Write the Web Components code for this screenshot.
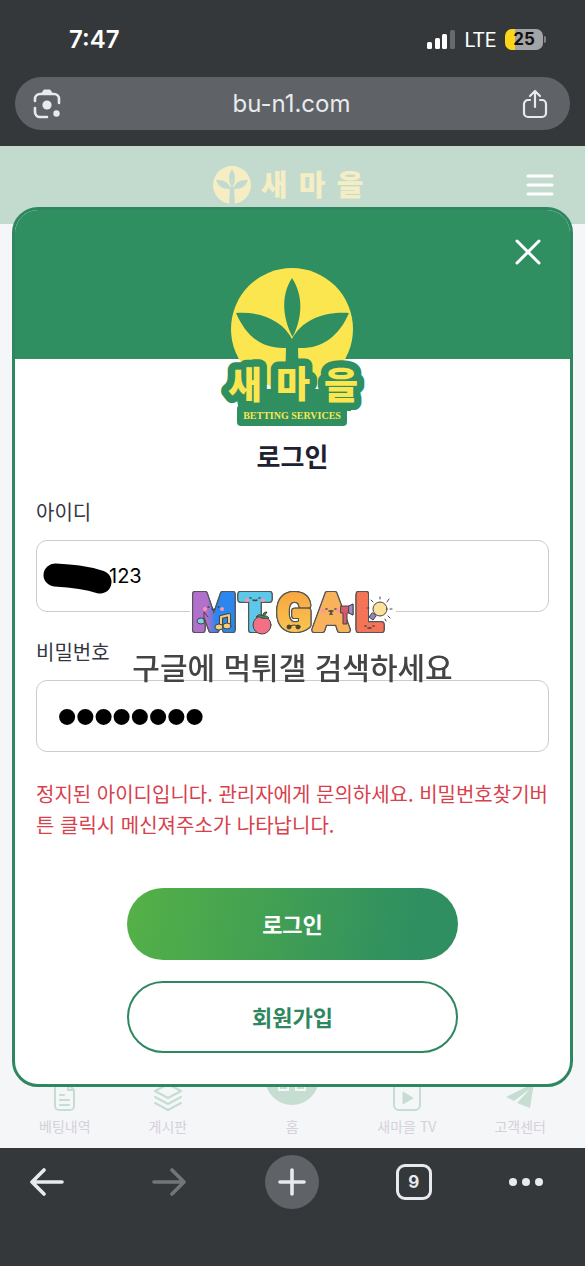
<!DOCTYPE html>
<html lang="ko">
<head>
<meta charset="utf-8">
<meta name="viewport" content="width=device-width, initial-scale=1">
<title>새마을</title>
<style>
    body {
        margin: 0;
        min-height: 100vh;
        display: flex;
        flex-direction: column;
        background-color: #35383b;
        font-family: "Noto Sans CJK KR", sans-serif;
    }
    site-page {
        flex: 1;
    }
</style>
</head>
<body>
<status-bar time="7:47" network="LTE" battery="25"></status-bar>
<address-bar>bu-n1.com</address-bar>
<site-page>
    <site-header slot="header"></site-header>
    <login-modal slot="modal" titulo="로그인">
        <text-field label="아이디" type="text" value="123" masked></text-field>
        <text-field label="비밀번호" type="password" value="abcd1234"></text-field>
        <span slot="error">정지된 아이디입니다. 관리자에게 문의하세요. 비밀번호찾기버튼 클릭시 메신져주소가 나타납니다.</span>
        <pill-button slot="actions" class="filled">로그인</pill-button>
        <pill-button slot="actions">회원가입</pill-button>
    </login-modal>
    <site-tabs slot="tabs"></site-tabs>
</site-page>
<browser-toolbar count="9"></browser-toolbar>
<water-mark>구글에 먹튀갤 검색하세요</water-mark>

<script>
// Common base: every component only gives its template and its styles
class BaseElement extends HTMLElement {
    constructor() {
        super();
        this.attachShadow({ mode: "open" });
    }

    connectedCallback() {
        const template = document.createElement("template");
        template.innerHTML = `${this.getTemplate()}<style>${this.getStyles()}</style>`;
        this.shadowRoot.appendChild(template.content.cloneNode(true));
    }
}

class StatusBar extends BaseElement {
    getTemplate() {
        return `
            <time>${this.getAttribute("time")}</time>
            <div class="right">
                <svg width="29" height="19" viewBox="0 0 29 19">
                    <g fill="#fff">
                        <rect x="0" y="12" width="5" height="7" rx="1.5"/>
                        <rect x="8" y="8" width="5" height="11" rx="1.5"/>
                        <rect x="15" y="4" width="5" height="15" rx="1.5"/>
                    </g>
                    <rect x="23" y="0" width="5" height="19" rx="1.5" fill="#67696c"/>
                </svg>
                <span class="network">${this.getAttribute("network")}</span>
                <span class="battery">${this.getAttribute("battery")}</span>
            </div>
        `;
    }

    getStyles() {
        return `
            :host {
                display: flex;
                justify-content: space-between;
                align-items: center;
                height: 77px;
                box-sizing: border-box;
                padding: 2px 38px 0 69px;
                color: #fff;
                font-family: Inter, sans-serif;
            }
            time {
                font-size: 24px;
                font-weight: 600;
            }
            .right {
                display: flex;
                align-items: center;
                gap: 9px;
            }
            .network {
                font-family: Roboto, sans-serif;
                font-size: 20px;
            }
            .battery {
                position: relative;
                width: 38px;
                margin-right: 4px;
                border-radius: 7px;
                background: linear-gradient(90deg, #fdd61a 10px, #a3a4a6 10px);
                color: #111;
                font-size: 17px;
                font-weight: 700;
                line-height: 21px;
                text-align: center;
            }
            .battery::after {
                content: "";
                position: absolute;
                left: 39px;
                top: 7px;
                width: 2px;
                height: 7px;
                border-radius: 0 2px 2px 0;
                background-color: #808285;
            }
        `;
    }
}

class AddressBar extends BaseElement {
    getTemplate() {
        return `
            <button aria-label="Lens">
                <svg width="28" height="30" viewBox="0 0 28 30" fill="none" stroke="#e8eaed" stroke-width="2.6" stroke-linecap="round">
                    <path d="M2 12V10a5 5 0 0 1 5-5h14a5 5 0 0 1 5 5v4M2 19v4a5 5 0 0 0 5 5h7"/>
                    <path d="M9 4l2-3h6l2 3z" fill="#e8eaed" stroke-width="1"/>
                    <circle cx="14" cy="16" r="4.6" fill="#e8eaed" stroke="none"/>
                    <circle cx="23.5" cy="24.5" r="3.2" fill="#e8eaed" stroke="none"/>
                </svg>
            </button>
            <button class="url"><slot></slot></button>
            <button aria-label="Share">
                <svg width="26" height="30" viewBox="0 0 26 30" fill="none" stroke="#e8eaed" stroke-width="2.2" stroke-linecap="round" stroke-linejoin="round">
                    <path d="M8 11H6a4 4 0 0 0-4 4v9a4 4 0 0 0 4 4h14a4 4 0 0 0 4-4v-9a4 4 0 0 0-4-4h-2M13 18V2M8 7l5-5 5 5"/>
                </svg>
            </button>
        `;
    }

    getStyles() {
        return `
            :host {
                display: flex;
                align-items: center;
                height: 53px;
                margin: 0 15px 16px;
                padding: 0 22px 0 18px;
                border-radius: 27px;
                background-color: #5f6266;
            }
            button {
                display: flex;
                padding: 0;
                border: 0;
                background: none;
                color: #e8eaed;
            }
            .url {
                flex: 1;
                justify-content: center;
                font: 24px Inter, sans-serif;
            }
        `;
    }
}

class SitePage extends BaseElement {
    getTemplate() {
        return `
            <slot name="header"></slot>
            <slot name="tabs"></slot>
            <div class="overlay"><slot name="modal"></slot></div>
        `;
    }

    getStyles() {
        return `
            :host {
                position: relative;
                display: flex;
                flex-direction: column;
                justify-content: space-between;
                background-color: #f5f6f8;
            }
            .overlay {
                position: absolute;
                inset: 0;
                display: flex;
                align-items: center;
                padding: 0 12px;
            }
            ::slotted(login-modal) {
                flex: 1;
            }
        `;
    }
}

class SiteHeader extends BaseElement {
    getTemplate() {
        return `
            <span></span>
            <svg class="logo" width="152" height="40" viewBox="0 0 152 40">
                <circle cx="19" cy="20" r="19" fill="#f5edc4"/>
                <g fill="#c3dace">
                    <path d="M19 4q6 9 0 19q-6-10 0-19zM3 15q12-1 15 9q-12 1-15-9zM35 15q-12-1-15 9q12 1 15-9z"/>
                    <path d="M17 22h4l1 18h-6z"/>
                </g>
                <g fill="#f5edc4" font-family="Noto Sans CJK KR, sans-serif" font-weight="900" font-size="29" text-anchor="middle">
                    <text x="61" y="31">새</text>
                    <text x="99" y="31">마</text>
                    <text x="137" y="31">을</text>
                </g>
            </svg>
            <button aria-label="메뉴">
                <svg width="28" height="24" viewBox="0 0 28 24" stroke="#fff" stroke-width="3" stroke-linecap="round">
                    <path d="M2 3h24M2 12h24M2 21h24"/>
                </svg>
            </button>
        `;
    }

    getStyles() {
        return `
            :host {
                display: grid;
                grid-template-columns: 1fr auto 1fr;
                align-items: center;
                height: 78px;
                padding: 0 31px 0 23px;
                background-color: #c3dace;
            }
            .logo {
                overflow: visible;
            }
            button {
                display: flex;
                justify-self: end;
                padding: 0;
                border: 0;
                background: none;
            }
        `;
    }
}

class BrandLogo extends BaseElement {
    getTemplate() {
        return `
            <svg width="147" height="160" viewBox="0 0 147 160">
                <circle cx="73" cy="62" r="61" fill="#fbe650"/>
                <g fill="#2f8f60">
                    <path d="M73 11C83 26 85 48 73.5 70C62 48 63 26 73 11z"/>
                    <path d="M17 46C42 44 64 54 73 72C82 54 104 44 130 46C119 71 102 82 79 81L80 118H66L67 81C44 82 28 71 17 46z"/>
                    <rect x="18" y="138" width="110" height="21" rx="4"/>
                    <path d="M16 122h116v22H20z"/>
                </g>
                <g fill="#fbe650" stroke="#2f8f60" stroke-width="15" stroke-linejoin="round" paint-order="stroke" font-family="Noto Sans CJK KR, sans-serif" font-weight="900" font-size="37" text-anchor="middle">
                    <text x="26" y="132">새</text>
                    <text x="74" y="131">마</text>
                    <text x="122" y="132">을</text>
                </g>
                <text x="73" y="152" fill="#fbe650" font-family="Liberation Serif, serif" font-weight="700" font-size="10" text-anchor="middle">BETTING SERVICES</text>
            </svg>
        `;
    }

    getStyles() {
        return `
            :host {
                display: block;
            }
            svg {
                display: block;
                overflow: visible;
            }
        `;
    }
}

class LoginModal extends BaseElement {
    getTemplate() {
        return `
            <header>
                <button aria-label="닫기">
                    <svg width="26" height="26" viewBox="0 0 26 26" stroke="#fff" stroke-width="3" stroke-linecap="round">
                        <path d="M2 2l22 22M24 2L2 24"/>
                    </svg>
                </button>
            </header>
            <brand-logo></brand-logo>
            <h2>${this.getAttribute("titulo")}</h2>
            <div class="fields"><slot></slot></div>
            <p><slot name="error"></slot></p>
            <div class="actions"><slot name="actions"></slot></div>
        `;
    }

    getStyles() {
        return `
            :host {
                display: flex;
                flex-direction: column;
                overflow: hidden;
                border: 3px solid #2f8761;
                border-radius: 26px;
                background-color: #fff;
            }
            header {
                display: flex;
                justify-content: flex-end;
                align-items: flex-start;
                height: 149px;
                box-sizing: border-box;
                padding: 29px 29px 0;
                background-color: #2f8f60;
            }
            header button {
                display: flex;
                padding: 0;
                border: 0;
                background: none;
            }
            brand-logo {
                align-self: center;
                margin-top: -92px;
            }
            h2 {
                margin: 14px 0 27px;
                color: #1e2130;
                font-size: 26px;
                font-weight: 700;
                line-height: 30px;
                text-align: center;
            }
            .fields {
                display: flex;
                flex-direction: column;
                gap: 26px;
                padding: 0 21px;
            }
            p {
                margin: 26px 21px 48px;
                color: #d8404c;
                font-size: 20px;
                line-height: 31px;
                word-break: break-all;
            }
            .actions {
                display: flex;
                flex-direction: column;
                gap: 21px;
                padding: 0 112px 31px;
            }
        `;
    }
}

class TextField extends BaseElement {
    getTemplate() {
        // The hand-drawn stroke hides the first part of the id
        const scribble = `
            <svg width="70" height="34" viewBox="0 0 70 34">
                <path d="M12 13C28 14 42 15 57 20" fill="none" stroke="#000" stroke-width="23" stroke-linecap="round"/>
            </svg>
        `;
        return `
            <label for="campo">${this.getAttribute("label")}</label>
            <div class="box">
                <input id="campo" type="${this.getAttribute("type")}" value="${this.getAttribute("value")}">
                ${this.hasAttribute("masked") ? scribble : ""}
            </div>
        `;
    }

    getStyles() {
        return `
            :host {
                display: flex;
                flex-direction: column;
                gap: 14px;
            }
            label {
                color: #33363f;
                font-size: 20px;
                line-height: 28px;
            }
            .box {
                position: relative;
                display: flex;
            }
            input {
                flex: 1;
                min-width: 0;
                height: 72px;
                box-sizing: border-box;
                padding: 0 22px;
                border: 1px solid #cbcbd0;
                border-radius: 11px;
                outline: none;
                background-color: #fff;
                color: #000;
                font: 20px Inter, sans-serif;
            }
            :host([masked]) input {
                padding-left: 72px;
            }
            input[type="password"] {
                padding-left: 21px;
                font: 52px "Liberation Sans", sans-serif;
                -webkit-text-stroke: 2px #000;
            }
            svg {
                position: absolute;
                left: 7px;
                top: 22px;
                overflow: visible;
            }
        `;
    }
}

class PillButton extends BaseElement {
    getTemplate() {
        return `<button><slot></slot></button>`;
    }

    getStyles() {
        return `
            :host {
                display: flex;
            }
            button {
                flex: 1;
                height: 72px;
                padding: 0 6px 2px;
                border: 2px solid #2f8761;
                border-radius: 36px;
                background-color: #fff;
                color: #2f8761;
                font: 700 22px "Noto Sans CJK KR", sans-serif;
            }
            :host(.filled) button {
                border: 0;
                background: linear-gradient(100deg, #55b146, #2f8f60 85%);
                color: #fff;
            }
        `;
    }
}

class SiteTabs extends BaseElement {
    getTemplate() {
        return `
            <a href="#">
                <svg width="22" height="28" viewBox="0 0 22 28" fill="none" stroke="#c6ddd2" stroke-width="2" stroke-linecap="round" stroke-linejoin="round">
                    <path d="M14 1H5a4 4 0 0 0-4 4v18a4 4 0 0 0 4 4h11a4 4 0 0 0 4-4V7zv6h6M6 12h4M6 17h9M6 22h9"/>
                </svg>
                베팅내역
            </a>
            <a href="#">
                <svg width="28" height="28" viewBox="0 0 28 28" fill="none" stroke="#c6ddd2" stroke-width="2" stroke-linecap="round" stroke-linejoin="round">
                    <path d="M14 1L1 8l13 7 13-7zM1 14l13 7 13-7M1 20l13 7 13-7"/>
                </svg>
                게시판
            </a>
            <a href="#" class="home">
                <svg width="54" height="54" viewBox="0 0 54 54">
                    <circle cx="27" cy="27" r="27" fill="#c6ddd2"/>
                    <path d="M14 29v10h9v-9M31 30v9h9V29" fill="none" stroke="#f5f6f8" stroke-width="2"/>
                </svg>
                홈
            </a>
            <a href="#">
                <svg width="28" height="28" viewBox="0 0 28 28">
                    <rect x="1" y="1" width="26" height="26" rx="5" fill="none" stroke="#c6ddd2" stroke-width="2"/>
                    <path d="M10 9l10 6-10 6z" fill="#c6ddd2" stroke="#c6ddd2" stroke-linejoin="round"/>
                </svg>
                새마을 TV
            </a>
            <a href="#">
                <svg width="28" height="28" viewBox="0 0 28 28" fill="#c6ddd2">
                    <path d="M28 0L0 14l8 4L24 6 11 20l13 5z"/>
                </svg>
                고객센터
            </a>
        `;
    }

    getStyles() {
        return `
            :host {
                display: flex;
                justify-content: space-between;
                align-items: flex-end;
                padding: 0 39px 11px;
            }
            a {
                display: flex;
                flex-direction: column;
                align-items: center;
                gap: 4px;
                color: #d4d1da;
                font-size: 14px;
                line-height: 22px;
                text-decoration: none;
            }
            .home {
                margin-left: 20px;
                gap: 10px;
            }
        `;
    }
}

class BrowserToolbar extends BaseElement {
    getTemplate() {
        return `
            <button aria-label="Back">
                <svg width="34" height="28" viewBox="0 0 34 28"><path d="M32 14H3M14 2L2 14l12 12"/></svg>
            </button>
            <button aria-label="Forward" class="off" disabled>
                <svg width="34" height="28" viewBox="0 0 34 28"><path d="M2 14h29M20 2l12 12-12 12"/></svg>
            </button>
            <button aria-label="New tab" class="round">
                <svg width="28" height="28" viewBox="0 0 28 28"><path d="M14 2v24M2 14h24"/></svg>
            </button>
            <button aria-label="Tabs"><span>${this.getAttribute("count")}</span></button>
            <button aria-label="Menu" class="more">
                <svg width="34" height="8" viewBox="0 0 34 8"><g fill="#e8eaed" stroke="none"><circle cx="4" cy="4" r="4"/><circle cx="17" cy="4" r="4"/><circle cx="30" cy="4" r="4"/></g></svg>
            </button>
        `;
    }

    getStyles() {
        return `
            :host {
                display: flex;
                justify-content: space-between;
                align-items: flex-start;
                height: 118px;
                box-sizing: border-box;
                padding: 7px 22px 0 20px;
            }
            button {
                display: flex;
                justify-content: center;
                align-items: center;
                width: 54px;
                height: 54px;
                padding: 0;
                border: 0;
                border-radius: 50%;
                background: none;
                color: #e8eaed;
            }
            svg {
                fill: none;
                stroke: #e8eaed;
                stroke-width: 3.6;
                stroke-linecap: round;
                stroke-linejoin: round;
            }
            .off svg {
                stroke: #737578;
            }
            .round {
                background-color: #5f6266;
            }
            .more {
                justify-content: flex-start;
            }
            span {
                width: 30px;
                border: 3px solid #e8eaed;
                border-radius: 9px;
                font: 700 17px/30px Inter, sans-serif;
            }
        `;
    }
}

class WaterMark extends BaseElement {
    getTemplate() {
        return `
            <svg width="206" height="48" viewBox="0 0 206 48">
                <defs>
                    <linearGradient id="m"><stop offset=".35" stop-color="#b070cc"/><stop offset=".55" stop-color="#2b86ee"/></linearGradient>
                    <linearGradient id="g" x2="0" y2="1"><stop stop-color="#f8a03c"/><stop offset="1" stop-color="#f9cd55"/></linearGradient>
                </defs>
                <rect y="16" width="206" height="12" fill="#fff"/>
                <g class="letters" font-family="Roboto, sans-serif" font-weight="700" font-size="50" text-anchor="middle" stroke-width="4" stroke-linejoin="round">
                    <text x="24" y="40" fill="url(#m)" stroke="url(#m)">M</text>
                    <text x="65" y="40" fill="#5cc8ea" stroke="#5cc8ea">T</text>
                    <text x="104" y="40" fill="url(#g)" stroke="url(#g)">G</text>
                    <text x="141" y="40" fill="#f9b25c" stroke="#f9b25c">A</text>
                    <text x="179" y="40" fill="#f47458" stroke="#f47458">L</text>
                </g>
                <g stroke="#444" stroke-width="1" stroke-linecap="round" stroke-linejoin="round">
                    <circle cx="72" cy="35" r="9" fill="#f26f86"/>
                    <path d="M72 28q-3-2-6-1q3-4 6-1q2-5 5-4q-1 3-4 4q4-1 6 2q-4 1-7 0z" fill="#3b9a58"/>
                    <ellipse cx="11" cy="31" rx="4" ry="3" fill="#7ed2ea"/>
                    <path d="M14 31V22l4 5" fill="none"/>
                    <path d="M31 37V27l8-2v10" fill="none" stroke="#444" stroke-width="4"/>
                    <path d="M31 37V27l8-2v10" fill="none" stroke="#f3cf7a" stroke-width="2"/>
                    <ellipse cx="29" cy="37" rx="4" ry="3" fill="#f3cf7a"/>
                    <ellipse cx="37" cy="36" rx="4" ry="3" fill="#f3cf7a"/>
                    <path d="M151 16h8l4-2v11l-4-2h-2v11h-4V23h-2z" fill="#d95a68"/>
                    <path d="M159 16l4-2v11l-4-2z" fill="#a58ccc"/>
                    <circle cx="190" cy="19" r="7" fill="#fbe19a"/>
                    <path d="M182 23l-3 4 4 3 3-4z" fill="#8e86bd"/>
                    <path d="M190 9V7M197 12l2-3M200 19h2M198 26l2 2M183 12l-2-2M195 29l1 2M179 18h-2" fill="none"/>
                    <path d="M18 17h1M28 17h1M22 19q2 1 3 0M60 8h1M69 8h1M63 10q2 1 4 0M136 19h1M145 19h1M139 21h4M175 36h1M183 36h1M178 38h3" fill="none" stroke-width="1.5"/>
                    <path d="M98 36q6-2 12 0" fill="none"/>
                    <circle cx="99" cy="37" r="2" fill="#594326"/>
                    <circle cx="108" cy="37" r="2" fill="#594326"/>
                </g>
                <g fill="#f896ad"><circle cx="15" cy="19" r="2"/><circle cx="32" cy="19" r="2"/><circle cx="57" cy="10" r="2"/><circle cx="73" cy="10" r="2"/><circle cx="133" cy="21" r="2"/><circle cx="148" cy="21" r="2"/></g>
            </svg>
            <span><slot></slot></span>
        `;
    }

    getStyles() {
        return `
            :host {
                position: fixed;
                inset: 0;
                display: flex;
                flex-direction: column;
                align-items: center;
                justify-content: center;
                padding-top: 11px;
                pointer-events: none;
            }
            svg {
                display: block;
                overflow: visible;
            }
            .letters text {
                filter: drop-shadow(1px 0 0 #555) drop-shadow(-1px 0 0 #555) drop-shadow(0 1px 0 #555) drop-shadow(0 -1px 0 #555);
            }
            span {
                margin-top: 6px;
                color: #444;
                font-size: 30px;
                font-weight: 500;
                line-height: 44px;
                white-space: nowrap;
            }
        `;
    }
}

customElements.define("status-bar", StatusBar);
customElements.define("address-bar", AddressBar);
customElements.define("site-page", SitePage);
customElements.define("site-header", SiteHeader);
customElements.define("brand-logo", BrandLogo);
customElements.define("login-modal", LoginModal);
customElements.define("text-field", TextField);
customElements.define("pill-button", PillButton);
customElements.define("site-tabs", SiteTabs);
customElements.define("browser-toolbar", BrowserToolbar);
customElements.define("water-mark", WaterMark);
</script>
</body>
</html>
